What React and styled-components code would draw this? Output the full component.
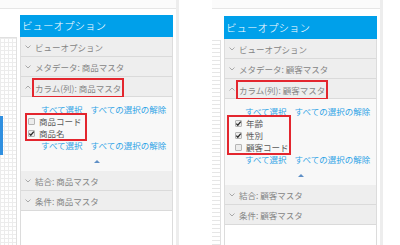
import React from 'react';
import styled, { createGlobalStyle } from 'styled-components';

const GlobalStyle = createGlobalStyle`
    html, body {
        margin: 0;
        padding: 0;
        background: #ffffff;
        font-family: "Noto Sans CJK JP", "Noto Sans", sans-serif;
    }
`;

const shots = [
    {
        master: '商品マスタ',
        canvas: 'grid',
        top: 6,
        head: 22,
        offset: 0,
        listLeft: 6,
        listWidth: 58,
        listPad: 1,
        items: [
            { label: '商品コード', checked: false },
            { label: '商品名', checked: true },
        ],
    },
    {
        master: '顧客マスタ',
        canvas: 'ticks',
        top: 7,
        head: 23,
        offset: 33,
        listLeft: 4,
        listWidth: 60,
        listPad: 6,
        items: [
            { label: '年齢', checked: true },
            { label: '性別', checked: true },
            { label: '顧客コード', checked: false },
        ],
    },
];

function Chevron({ up }) {
    return (
        <svg width="6" height="4" viewBox="0 0 6 4">
            <polyline
                points={up ? '0.5,3.5 3,1 5.5,3.5' : '0.5,0.5 3,3 5.5,0.5'}
                fill="none"
                stroke="#a0a0a0"
                strokeWidth="0.9"
            />
        </svg>
    );
}

function Section({ title, open, marked }) {
    return (
        <Row>
            <Chevron up={open} />
            <RowLabel $marked={marked}>{title}</RowLabel>
        </Row>
    );
}

function Links() {
    return (
        <LinkRow>
            <Link>すべて選択</Link>
            <Link>すべての選択の解除</Link>
        </LinkRow>
    );
}

function Shot({ data }) {
    return (
        <ShotFrame $offset={data.offset}>
            <TopBar />
            <ShotBody $top={data.top}>
                <Canvas $kind={data.canvas}>
                    {data.canvas === 'grid' && <Handle />}
                </Canvas>
                <Panel>
                    <Header $height={data.head}>ビューオプション</Header>
                    <Section title="ビューオプション" />
                    <Section title={`メタデータ: ${data.master}`} />
                    <Section title={`カラム(列): ${data.master}`} open marked />
                    <Content>
                        <Links />
                        <CheckList $left={data.listLeft} $width={data.listWidth} $pad={data.listPad}>
                            {data.items.map((item) => (
                                <CheckItem key={item.label}>
                                    <Box>
                                        {item.checked && (
                                            <svg width="7" height="7" viewBox="0 0 7 7">
                                                <polyline points="1.3,3.6 2.8,5.2 5.8,1.6" fill="none" stroke="#2b2b2b" strokeWidth="1.3" />
                                            </svg>
                                        )}
                                    </Box>
                                    {item.label}
                                </CheckItem>
                            ))}
                        </CheckList>
                        <Links />
                        <Toggle>
                            <Arrow />
                        </Toggle>
                    </Content>
                    <Section title={`結合: ${data.master}`} />
                    <Section title={`条件: ${data.master}`} />
                </Panel>
                <Spacer />
            </ShotBody>
        </ShotFrame>
    );
}

export default function App() {
    return (
        <>
            <GlobalStyle />
            <Page>
                {shots.map((s) => (
                    <Shot key={s.master} data={s} />
                ))}
            </Page>
        </>
    );
}

const Page = styled.div`
    width: 400px;
    height: 245px;
    overflow: hidden;
    display: flex;
    flex-direction: row;
    align-items: stretch;
`;

const ShotFrame = styled.div`
    margin-left: ${(p) => p.$offset}px;
    display: flex;
    flex-direction: column;
    border-right: 3px solid #ededed;
    height: 245px;
`;

const TopBar = styled.div`
    height: 8px;
    background: #fbfbfb;
    border-bottom: 1px solid #e6e6e6;
    flex-shrink: 0;
`;

const ShotBody = styled.div`
    flex: 1;
    display: flex;
    flex-direction: row;
    padding-top: ${(p) => p.$top}px;
    min-height: 0;
`;

const Canvas = styled.div`
    position: relative;
    width: ${(p) => (p.$kind === 'grid' ? 16 : 8)}px;
    margin-top: ${(p) => (p.$kind === 'grid' ? 22 : 24)}px;
    border-right: 1px solid #e0e0e0;
    border-top: ${(p) => (p.$kind === 'grid' ? '1px solid #e0e0e0' : 'none')};
    background-image: ${(p) =>
        p.$kind === 'grid'
            ? 'linear-gradient(#ececec 1px, transparent 1px), linear-gradient(90deg, #ececec 1px, transparent 1px)'
            : 'linear-gradient(#e6e6e6 1px, transparent 1px)'};
    background-size: 4px 4px;
`;

const Handle = styled.div`
    position: absolute;
    left: 0;
    top: 78px;
    width: 3px;
    height: 39px;
    background: #2f8fe0;
`;

const Panel = styled.div`
    width: 151px;
    margin-left: 3px;
    border-left: 1px solid #dcdcdc;
    border-right: 1px solid #dcdcdc;
    background: #ffffff;
    display: flex;
    flex-direction: column;
`;

const Spacer = styled.div`
    width: 3px;
`;

const Header = styled.div`
    height: ${(p) => p.$height}px;
    background: #00a0ea;
    color: #ffffff;
    font-size: 10.5px;
    font-weight: 300;
    line-height: ${(p) => p.$height}px;
    padding-left: 2px;
    margin-left: -1px;
    margin-right: -1px;
    white-space: nowrap;
`;

const Row = styled.div`
    height: 19px;
    border-bottom: 1px solid #dadada;
    background: #eeeeee;
    display: flex;
    align-items: center;
    gap: 4px;
    padding-left: 4px;
    color: #858585;
    font-size: 8.5px;
    white-space: nowrap;
`;

const RowLabel = styled.span`
    display: inline-block;
    line-height: 12px;
    padding: ${(p) => (p.$marked ? '2px 1px' : '0')};
    margin-left: ${(p) => (p.$marked ? '-1px' : '0')};
    outline: ${(p) => (p.$marked ? '2px solid #e3262e' : 'none')};
    margin-top: ${(p) => (p.$marked ? '2px' : '0')};
`;

const Content = styled.div`
    background: #f8f8f8;
    padding-top: 6px;
    display: flex;
    flex-direction: column;
`;

const LinkRow = styled.div`
    height: 12px;
    display: flex;
    gap: 8px;
    padding-left: 20px;
    align-items: center;
    white-space: nowrap;
`;

const Link = styled.span`
    color: #2ea3e6;
    font-size: 8.5px;
    line-height: 12px;
`;

const CheckList = styled.div`
    width: ${(p) => p.$width}px;
    margin-left: ${(p) => p.$left}px;
    padding-left: ${(p) => p.$pad}px;
    box-sizing: border-box;
    outline: 2px solid #e3262e;
    display: flex;
    flex-direction: column;
`;

const CheckItem = styled.div`
    height: 12px;
    display: flex;
    align-items: center;
    gap: 4px;
    font-size: 8.5px;
    color: #5a5a5a;
    white-space: nowrap;
`;

const Box = styled.span`
    width: 7px;
    height: 7px;
    box-sizing: border-box;
    border: 1px solid #b5b5b5;
    border-radius: 1px;
    background: #ececec;
    display: flex;
    align-items: center;
    justify-content: center;
    flex-shrink: 0;

    svg {
        margin: -1px;
    }
`;

const Toggle = styled.div`
    height: 20px;
    display: flex;
    justify-content: center;
    padding-top: 9px;
    box-sizing: border-box;
`;

const Arrow = styled.div`
    width: 0;
    height: 0;
    border-left: 3px solid transparent;
    border-right: 3px solid transparent;
    border-bottom: 3px solid #5f8fc6;
`;
